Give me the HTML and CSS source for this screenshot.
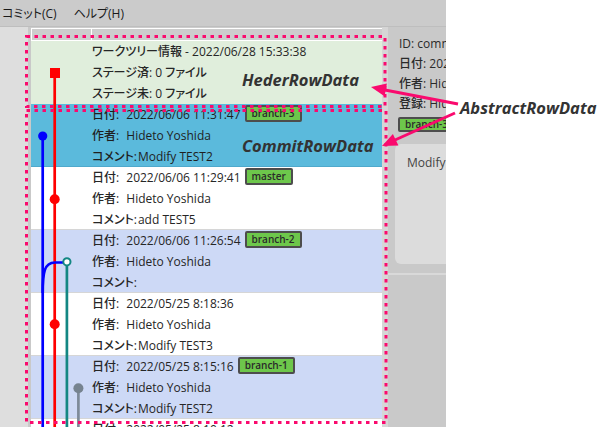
FILE: index.html
```html
<!DOCTYPE html>
<html lang="ja">
<head>
<meta charset="utf-8">
<title>Row data</title>
<link rel="stylesheet" href="styles.css">
</head>
<body>
<div class="stage">
  <div class="app">
    <div class="menubar">
      <span class="menu-item">コミット(C)</span>
      <span class="menu-item">ヘルプ(H)</span>
    </div>
    <div class="workspace">
      <div class="gutter"></div>
      <div class="list">
        <div class="colheader"><div class="col col-graph"></div><div class="col col-info"></div></div>
        <div class="rows">
          <svg class="graph" width="61" height="386" viewBox="0 0 61 386">
            <line x1="23.7" y1="37" x2="23.7" y2="386" stroke="#ff0000" stroke-width="2.7"/>
            <rect x="19" y="27" width="10" height="10" fill="#ff0000"/>
            <line x1="11.7" y1="95" x2="11.7" y2="386" stroke="#0000ff" stroke-width="2.7"/>
            <circle cx="11.7" cy="95" r="4.6" fill="#0000ff"/>
            <circle cx="23.7" cy="158.3" r="5" fill="#ff0000"/>
            <path d="M11.7,252 C11.7,232 13,221.5 24,221.5 L32,221.5" fill="none" stroke="#0000ff" stroke-width="2.7"/>
            <line x1="35.9" y1="224" x2="35.9" y2="386" stroke="#138783" stroke-width="2.7"/>
            <circle cx="35.9" cy="220.8" r="3.6" fill="#ffffff" stroke="#138783" stroke-width="2"/>
            <circle cx="23.7" cy="283.3" r="5" fill="#ff0000"/>
            <line x1="47.4" y1="347" x2="47.4" y2="386" stroke="#7d8a98" stroke-width="2.7"/>
            <circle cx="47.4" cy="347.3" r="5" fill="#76838f"/>
          </svg>
          <div class="row row-header">
            <div class="line"><span class="k">ワークツリー情報</span> - 2022/06/28 15:33:38</div>
            <div class="line"><span class="k">ステージ済:</span> 0 <span class="k">ファイル</span></div>
            <div class="line"><span class="k">ステージ未:</span> 0 <span class="k">ファイル</span></div>
          </div>
          <div class="row row-selected">
            <div class="line"><span class="k">日付:</span> <span class="v">2022/06/06 11:31:47</span><span class="badge">branch-3</span></div>
            <div class="line"><span class="k">作者:</span> <span class="v">Hideto Yoshida</span></div>
            <div class="line"><span class="k">コメント:</span><span class="c">Modify TEST2</span></div>
          </div>
          <div class="row row-plain">
            <div class="line"><span class="k">日付:</span> <span class="v">2022/06/06 11:29:41</span><span class="badge">master</span></div>
            <div class="line"><span class="k">作者:</span> <span class="v">Hideto Yoshida</span></div>
            <div class="line"><span class="k">コメント:</span><span class="c">add TEST5</span></div>
          </div>
          <div class="row row-alt">
            <div class="line"><span class="k">日付:</span> <span class="v">2022/06/06 11:26:54</span><span class="badge">branch-2</span></div>
            <div class="line"><span class="k">作者:</span> <span class="v">Hideto Yoshida</span></div>
            <div class="line"><span class="k">コメント:</span></div>
          </div>
          <div class="row row-plain">
            <div class="line"><span class="k">日付:</span> <span class="v">2022/05/25 8:18:36</span></div>
            <div class="line"><span class="k">作者:</span> <span class="v">Hideto Yoshida</span></div>
            <div class="line"><span class="k">コメント:</span><span class="c">Modify TEST3</span></div>
          </div>
          <div class="row row-alt">
            <div class="line"><span class="k">日付:</span> <span class="v">2022/05/25 8:15:16</span><span class="badge">branch-1</span></div>
            <div class="line"><span class="k">作者:</span> <span class="v">Hideto Yoshida</span></div>
            <div class="line"><span class="k">コメント:</span><span class="c">Modify TEST2</span></div>
          </div>
          <div class="row row-plain">
            <div class="line"><span class="k">日付:</span> <span class="v">2022/05/25 8:10:12</span></div>
            <div class="line"><span class="k">作者:</span> <span class="v">Hideto Yoshida</span></div>
            <div class="line"><span class="k">コメント:</span><span class="c">add TEST4</span></div>
          </div>
        </div>
      </div>
      <div class="splitter"></div>
      <div class="detail">
        <div class="dline">ID: commit-3a9f</div>
        <div class="dline"><span class="k">日付:</span> 2022/06/06</div>
        <div class="dline"><span class="k">作者:</span> Hideto</div>
        <div class="dline"><span class="k">登録:</span> Hideto</div>
        <div class="dbadge">branch-3</div>
        <div class="dcomment">Modify TEST2</div>
        <div class="drule"></div>
      </div>
    </div>
  </div>

  <svg class="annot" width="600" height="427" viewBox="0 0 600 427">
    <rect x="26.5" y="36.5" width="358.5" height="70" fill="none" stroke="#fa0a6e" stroke-width="3" stroke-dasharray="3.5 4.5"/>
    <rect x="26.5" y="110.5" width="359.5" height="312" fill="none" stroke="#fa0a6e" stroke-width="3" stroke-dasharray="3.5 4.5"/>
    <line x1="458" y1="104" x2="385" y2="90" stroke="#fa0a6e" stroke-width="3"/>
    <polygon points="371,87 386.9,83.5 384.5,96.3" fill="#fa0a6e"/>
    <line x1="455" y1="113" x2="395" y2="140" stroke="#fa0a6e" stroke-width="3"/>
    <polygon points="382,146 398.4,145.6 392.9,133.9" fill="#fa0a6e"/>
  </svg>
  <div class="note note-header">HederRowData</div>
  <div class="note note-commit">CommitRowData</div>
  <div class="note note-abstract">AbstractRowData</div>
</div>
</body>
</html>
```

FILE: styles.css
```css
html, body {
  margin: 0;
  padding: 0;
}

body {
  width: 600px;
  height: 427px;
  overflow: hidden;
  background: #ffffff;
  font-family: "Open Sans", "Noto Sans CJK JP", sans-serif;
  font-feature-settings: "palt";
}

.stage {
  position: relative;
  width: 600px;
  height: 427px;
  display: flex;
}

.app {
  width: 446px;
  height: 427px;
  display: flex;
  flex-direction: column;
  background: #cacaca;
  overflow: hidden;
}

.menubar {
  height: 26px;
  border-bottom: 1px solid #bebebe;
  background: #cbcbcb;
  display: flex;
  align-items: center;
  gap: 17px;
  padding-left: 2px;
  font-size: 12px;
  color: #1a1a1a;
}

.workspace {
  flex: 1;
  display: flex;
  min-height: 0;
}

.gutter {
  width: 28px;
  background: #dedede;
}

.list {
  width: 351px;
  border-left: 3px solid #c9c9c9;
  background: #cdcdcd;
  display: flex;
  flex-direction: column;
}

.colheader {
  margin-top: 1px;
  height: 13px;
  box-sizing: border-box;
  border-top: 1px solid #ffffff;
  border-bottom: 1px solid #ffffff;
  display: flex;
}

.col-graph {
  width: 60px;
  box-sizing: border-box;
  border-left: 1px solid #ffffff;
}

.col-info {
  flex: 1;
  border-left: 1px solid #ffffff;
}

.rows {
  position: relative;
  flex: 1;
  background: #ffffff;
  overflow: hidden;
}

.graph {
  position: absolute;
  left: 0;
  top: 0;
  z-index: 1;
}

.row {
  height: 63px;
  box-sizing: border-box;
  border-bottom: 1px solid #d6d6d6;
  padding-left: 61px;
  font-size: 12px;
  line-height: 21px;
  color: #262626;
  white-space: nowrap;
  overflow: hidden;
}

.row-header { background: #e0eedc; border-bottom-color: #e0eedc; }
.row-selected { background: #5bbadc; border-bottom-color: #4fa9cc; color: #1f1f1f; }
.row-plain { background: #ffffff; }
.row-alt { background: #cdd9f6; }

.line {
  height: 21px;
}

.k {
  font-weight: 500;
}

.v {
  margin-left: 4px;
}

.c {
  margin-left: 1px;
}

.badge {
  display: inline-block;
  vertical-align: top;
  margin-top: 1px;
  margin-left: 4px;
  height: 17px;
  box-sizing: border-box;
  padding: 0 5px;
  border: 2px solid #4d4d4d;
  border-radius: 2px;
  background: #6dc74b;
  color: #2a2a2a;
  font-size: 10px;
  font-weight: 600;
  line-height: 13px;
}

.splitter {
  width: 6px;
  background: #d6d6d6;
}

.detail {
  width: 58px;
  box-sizing: border-box;
  padding: 7px 0 0 7px;
  background: #c9c9c9;
  overflow: hidden;
  font-size: 12px;
  line-height: 20px;
  color: #2a2a2a;
  white-space: nowrap;
}

.dline {
  padding-left: 4px;
}

.dbadge {
  display: inline-block;
  margin: 3px 0 0 3px;
  height: 15px;
  box-sizing: border-box;
  padding: 0 5px;
  border: 2px solid #4d4d4d;
  border-radius: 2px;
  background: #6dc74b;
  color: #2a2a2a;
  font-size: 10px;
  font-weight: 600;
  line-height: 11px;
  vertical-align: top;
}

.dcomment {
  margin-top: 10px;
  width: 120px;
  height: 120px;
  box-sizing: border-box;
  padding: 9px 12px;
  border-radius: 6px;
  background: #dcdcdc;
  color: #444444;
}

.drule {
  margin: 9px 0 0 -7px;
  width: 80px;
  height: 2px;
  background: #d9d9d9;
}

.annot {
  position: absolute;
  left: 0;
  top: 0;
  z-index: 5;
  pointer-events: none;
}

.note {
  position: absolute;
  z-index: 6;
  font-family: "Open Sans", sans-serif;
  font-size: 16.5px;
  font-weight: 700;
  font-style: italic;
  line-height: 20px;
  color: #333333;
  white-space: nowrap;
}

.note-header { left: 242px; top: 70px; }
.note-commit { left: 242px; top: 136px; }
.note-abstract { left: 460px; top: 98px; }
```
